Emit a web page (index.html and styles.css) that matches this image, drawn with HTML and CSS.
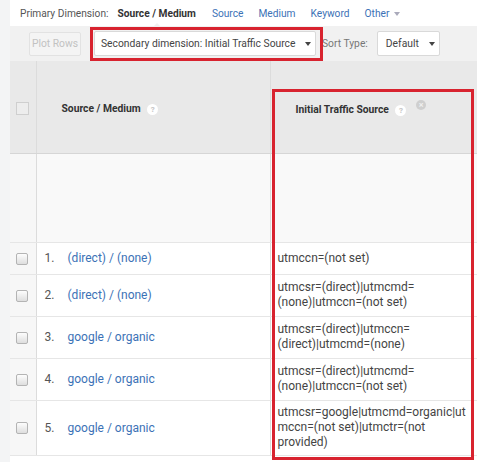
FILE: index.html
```html
<!DOCTYPE html>
<html lang="en">
<head>
  <meta charset="UTF-8">
  <meta name="viewport" content="width=device-width, initial-scale=1.0">
  <title>Source / Medium Report</title>
  <link rel="stylesheet" href="styles.css">
</head>
<body>
  <div class="page">
    <div class="primary-bar">
      <span class="label">Primary Dimension:</span>
      <span class="current">Source / Medium</span>
      <a class="dim-link">Source</a>
      <a class="dim-link">Medium</a>
      <a class="dim-link">Keyword</a>
      <a class="dim-link">Other <span class="caret caret-light"></span></a>
    </div>

    <div class="toolbar">
      <button class="btn btn-disabled">Plot Rows</button>
      <div class="select select-secondary">
        Secondary dimension: Initial Traffic Source
        <span class="caret"></span>
      </div>
      <span class="sort-label">Sort Type:</span>
      <div class="select select-sort">
        Default
        <span class="caret"></span>
      </div>
    </div>

    <table class="report">
      <colgroup>
        <col class="c-check">
        <col class="c-source">
        <col class="c-initial">
      </colgroup>
      <thead>
        <tr class="head-row">
          <th class="col-check"><span class="checkbox checkbox-head"></span></th>
          <th class="col-source">Source / Medium <span class="help">?</span></th>
          <th class="col-initial">Initial Traffic Source <span class="help">?</span> <span class="remove">&times;</span></th>
        </tr>
      </thead>
      <tbody>
        <tr class="summary-row">
          <td class="col-check"></td>
          <td class="col-source"></td>
          <td class="col-initial"></td>
        </tr>
        <tr class="row-one">
          <td class="col-check"><span class="checkbox"></span></td>
          <td class="col-source"><span class="num">1.</span><a class="row-link">(direct) / (none)</a></td>
          <td class="col-initial">utmccn=(not set)</td>
        </tr>
        <tr class="row-two">
          <td class="col-check"><span class="checkbox"></span></td>
          <td class="col-source"><span class="num">2.</span><a class="row-link">(direct) / (none)</a></td>
          <td class="col-initial">utmcsr=(direct)|utmcmd=<br>(none)|utmccn=(not set)</td>
        </tr>
        <tr class="row-two">
          <td class="col-check"><span class="checkbox"></span></td>
          <td class="col-source"><span class="num">3.</span><a class="row-link">google / organic</a></td>
          <td class="col-initial">utmcsr=(direct)|utmccn=<br>(direct)|utmcmd=(none)</td>
        </tr>
        <tr class="row-two">
          <td class="col-check"><span class="checkbox"></span></td>
          <td class="col-source"><span class="num">4.</span><a class="row-link">google / organic</a></td>
          <td class="col-initial">utmcsr=(direct)|utmcmd=<br>(none)|utmccn=(not set)</td>
        </tr>
        <tr class="row-three">
          <td class="col-check"><span class="checkbox"></span></td>
          <td class="col-source"><span class="num">5.</span><a class="row-link">google / organic</a></td>
          <td class="col-initial">utmcsr=google|utmcmd=organic|ut<br>mccn=(not set)|utmctr=(not<br>provided)</td>
        </tr>
      </tbody>
    </table>

    <!-- highlight boxes drawn over the screenshot -->
    <div class="mark mark-secondary"></div>
    <div class="mark mark-column"></div>
  </div>
</body>
</html>
```

FILE: styles.css
```css
body {
  margin: 0;
  background-color: #f3f4f5;
  font-family: Roboto, Arial, sans-serif;
  color: #444;
}
.page {
  position: relative;
  margin-left: 10px;
  height: 462px;
  overflow: hidden;
  background: #fff;
}

/* primary dimension bar */
.primary-bar {
  position: relative;
  display: flex;
  align-items: center;
  height: 26px;
  padding-left: 10px;
  font-size: 10.2px;
  color: #555;
}
.primary-bar .label {
  margin-right: 9px;
}
.primary-bar .current {
  position: relative;
  margin-right: 16px;
  font-weight: bold;
  color: #333;
}
.primary-bar .current::after {
  content: "";
  position: absolute;
  left: 50%;
  bottom: -9px;
  margin-left: -5px;
  border-left: 5px solid transparent;
  border-right: 5px solid transparent;
  border-bottom: 5px solid #f1f1f1;
}
.dim-link {
  margin-right: 15px;
  color: #3c72b6;
}

.caret {
  display: inline-block;
  width: 0;
  height: 0;
  margin-left: 6px;
  vertical-align: middle;
  border-left: 3px solid transparent;
  border-right: 3px solid transparent;
  border-top: 4px solid #444;
}
.caret-light {
  margin-left: 2px;
  border-top-color: #aab;
}

/* toolbar */
.toolbar {
  display: flex;
  align-items: center;
  height: 35px;
  padding-left: 19px;
  background-color: #f1f1f1;
  font-size: 10.3px;
}
.btn {
  width: 52px;
  height: 24px;
  margin-right: 13px;
  padding: 0;
  font-family: Roboto, Arial, sans-serif;
  font-size: 10.3px;
  border: 1px solid #e2e2e2;
  border-radius: 2px;
  background: #f4f4f4;
}
.btn-disabled {
  color: #c2c2c2;
}
.select {
  display: flex;
  align-items: center;
  height: 25px;
  padding-left: 6px;
  box-sizing: border-box;
  background: #fff;
  border: 1px solid #d9d9d9;
  border-radius: 2px;
  color: #444;
  white-space: nowrap;
}
.select-secondary {
  width: 222px;
  margin-right: 6px;
}
.select-secondary .caret {
  margin-left: 10px;
}
.select-sort {
  width: 63px;
  padding-left: 8px;
}
.select-sort .caret {
  margin-left: 10px;
}
.sort-label {
  margin-right: 9px;
  color: #777;
}

/* report table */
.report {
  width: 520px;
  border-collapse: collapse;
  table-layout: fixed;
  font-size: 12px;
}
.c-check {
  width: 26px;
}
.c-source {
  width: 234px;
}
.report th,
.report td {
  padding: 0;
  vertical-align: middle;
  text-align: left;
  border-bottom: 1px solid #e6e6e6;
}
.report .col-check {
  padding-left: 6px;
}
.col-source,
.col-initial {
  border-left: 1px solid #dcdcdc;
}

.head-row {
  height: 92px;
}
.head-row th {
  padding-top: 3px;
  background-color: #e9e9e9;
  border-bottom: 1px solid #d6d6d6;
  font-size: 10.3px;
  font-weight: bold;
  color: #333;
}
.head-row .col-source,
.head-row .col-initial {
  padding-left: 25px;
}
.help {
  display: inline-block;
  width: 11px;
  height: 11px;
  margin-left: 4px;
  border-radius: 50%;
  background: #fff;
  color: #c4c4c4;
  font-size: 8px;
  line-height: 11px;
  text-align: center;
  vertical-align: middle;
}
.remove {
  display: inline-block;
  width: 10px;
  height: 10px;
  margin-left: 7px;
  border-radius: 50%;
  background: #cfcfcf;
  color: #eee;
  font-size: 9px;
  line-height: 10px;
  text-align: center;
  vertical-align: 5px;
}

.summary-row {
  height: 89px;
}
.summary-row td {
  background-color: #f9f9f9;
}

.report tbody td.col-check {
  background-color: #f7f7f7;
}
.row-one {
  height: 32px;
}
.row-two {
  height: 42px;
}
.row-three {
  height: 55px;
}
.report tbody .col-source {
  padding-left: 8px;
}
.report tbody .col-initial {
  padding-left: 7px;
  line-height: 15px;
  white-space: nowrap;
  color: #444;
}
.num {
  display: inline-block;
  width: 23px;
  color: #555;
}
.row-link {
  color: #3c72b6;
}

.checkbox {
  display: inline-block;
  width: 10px;
  height: 10px;
  vertical-align: middle;
  border: 1px solid #b4b4b4;
  border-radius: 2px;
  background: linear-gradient(#fdfdfd, #dedede);
}
.checkbox-head {
  width: 11px;
  height: 11px;
  border-color: #cfcfcf;
  border-radius: 0;
  background: #ededed;
}

/* red annotation boxes */
.mark {
  position: absolute;
  border: 3px solid #d8232f;
  box-sizing: border-box;
}
.mark-secondary {
  left: 80px;
  top: 27px;
  width: 233px;
  height: 34px;
}
.mark-column {
  left: 262px;
  top: 89px;
  width: 202px;
  height: 371px;
}
```
